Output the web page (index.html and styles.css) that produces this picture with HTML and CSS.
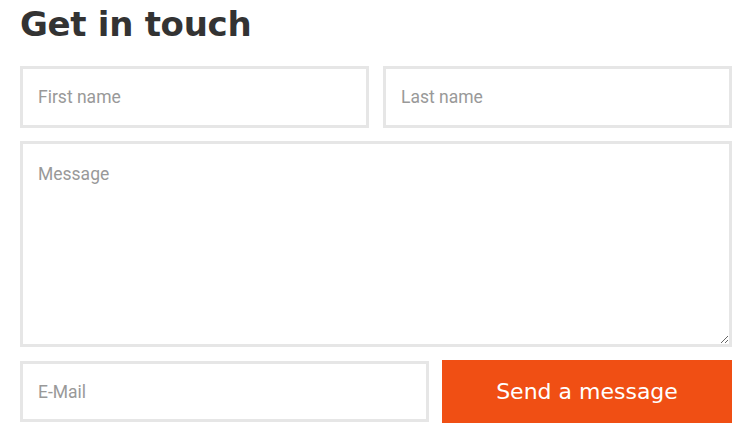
FILE: index.html
```html
<!DOCTYPE html>
<html>
<head>
<meta charset="utf-8">
<link rel="stylesheet" href="styles.css">
</head>
<body>
<form class="contact">
  <h1 class="title">Get in touch</h1>
  <div class="row two">
    <input class="field" type="text" placeholder="First name">
    <input class="field" type="text" placeholder="Last name">
  </div>
  <textarea class="field message" placeholder="Message"></textarea>
  <div class="row bottom">
    <input class="field" type="email" placeholder="E-Mail">
    <button class="send" type="button">Send a message</button>
  </div>
</form>
</body>
</html>
```
FILE: styles.css
```css
html, body {
  margin: 0;
  padding: 0;
  background: #fff;
}
.contact {
  width: 712px;
  padding: 0 0 0 20px;
  display: flex;
  flex-direction: column;
}
.title {
  margin: 2px 0 0 0;
  height: 64px;
  font-family: "DejaVu Sans", sans-serif;
  font-weight: 700;
  font-size: 34px;
  line-height: 44px;
  color: #333;
  letter-spacing: -0.3px;
}
.row {
  display: grid;
  column-gap: 14px;
}
.two {
  grid-template-columns: 1fr 1fr;
}
.bottom {
  grid-template-columns: 409px 1fr;
  column-gap: 13px;
  align-items: start;
}
.field {
  box-sizing: border-box;
  height: 62px;
  margin: 0;
  border: 3px solid #e6e6e6;
  border-radius: 0;
  background: #fff;
  padding: 0 15px;
  font-family: Roboto, sans-serif;
  font-size: 17.5px;
  color: #333;
  outline: none;
}
.field::placeholder {
  color: #999;
}
.message {
  display: block;
  width: 712px;
  height: 206px;
  margin: 13px 0 13px 0;
  padding: 20px 15px;
  resize: vertical;
}
.bottom .field {
  margin-top: 1px;
  height: 61px;
}
.send {
  height: 63px;
  border: none;
  border-radius: 0;
  background: #f04f14;
  color: #fff;
  font-family: "DejaVu Sans", sans-serif;
  font-size: 22px;
  font-weight: 400;
  padding: 0;
  letter-spacing: 0;
  cursor: pointer;
}
```
